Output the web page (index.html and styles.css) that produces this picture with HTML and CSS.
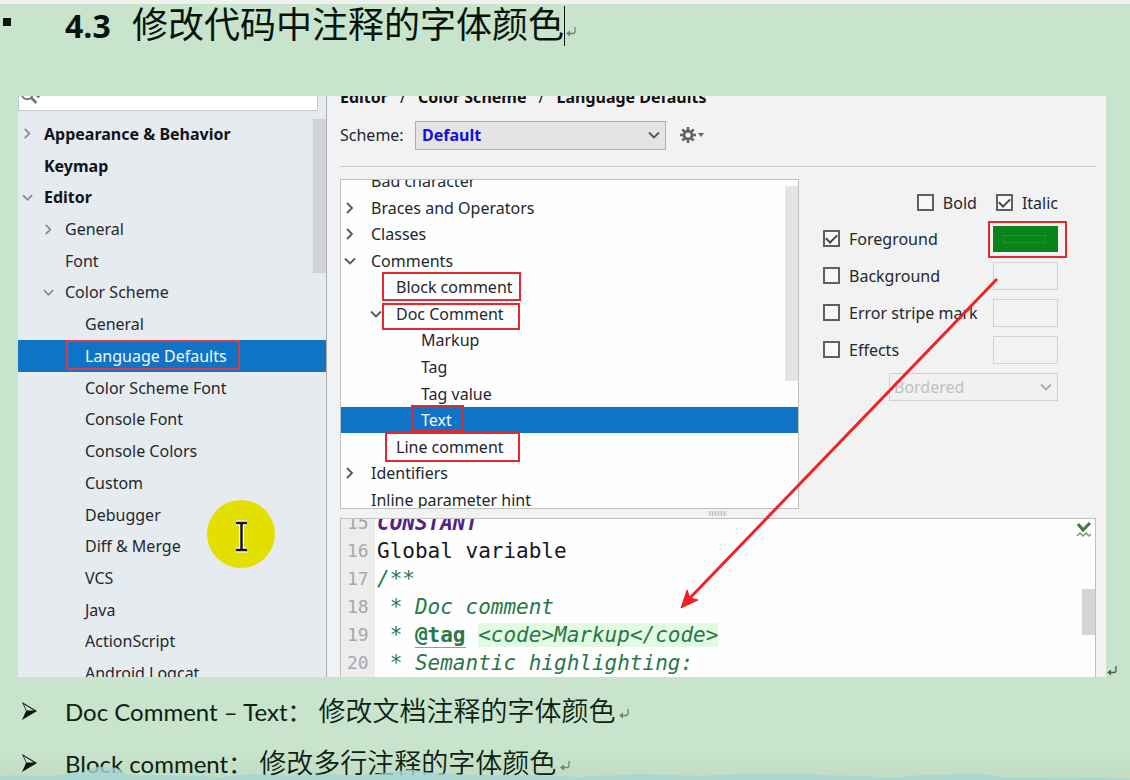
FILE: index.html
```html
<!DOCTYPE html>
<html lang="zh-CN">
<head>
<meta charset="utf-8">
<title>4.3 修改代码中注释的字体颜色</title>
<link rel="stylesheet" href="styles.css">
</head>
<body>
<svg class="defs" aria-hidden="true">
  <symbol id="right" viewBox="0 0 12 12"><path d="M3 1l5 5-5 5" fill="none" stroke="currentColor" stroke-width="1.8"/></symbol>
  <symbol id="down" viewBox="0 0 12 12"><path d="M1 3.500l5 5 5-5" fill="none" stroke="currentColor" stroke-width="1.8"/></symbol>
  <symbol id="return" viewBox="0 0 12 12"><path d="M10 1v4.500q0 2-2 2H3" fill="none" stroke="currentColor" stroke-width="1.300"/><path d="M1 7.500l4-3v6z" fill="currentColor"/></symbol>
  <symbol id="bullet" viewBox="0 0 18 20"><path d="M2 1L17 10 2 19 6 10z" fill="#07150c"/><path d="M3.800 3.300L14 9.500H6.500z" fill="#c8e4cd"/></symbol>
</svg>
<main class="page">
  <h1 class="title"><span class="square"></span><span class="num">4.3</span><span class="title-text">修改代码中注释的字体颜色</span><span class="caret"></span><svg class="ret"><use href="#return"/></svg></h1>

  <div class="figure">
    <section class="dialog">
      <nav class="sidebar" aria-label="Settings">
        <div class="search">
          <input type="text" aria-label="Search settings">
          <svg class="search-icon" viewBox="0 0 24 20"><circle cx="9" cy="7" r="6" fill="none" stroke="#777" stroke-width="2"/><path d="M13 11l6 6" stroke="#777" stroke-width="3"/><path d="M18 9h6l-3 3z" fill="#777"/></svg>
        </div>
        <ul class="settings">
          <li class="top"><svg><use href="#right"/></svg>Appearance &amp; Behavior</li>
          <li class="top">Keymap</li>
          <li class="top"><svg><use href="#down"/></svg>Editor</li>
          <li class="mid"><svg><use href="#right"/></svg>General</li>
          <li class="mid">Font</li>
          <li class="mid"><svg><use href="#down"/></svg>Color Scheme</li>
          <li>General</li>
          <li class="selected">Language Defaults<i class="mark mark-language"></i></li>
          <li>Color Scheme Font</li>
          <li>Console Font</li>
          <li>Console Colors</li>
          <li>Custom</li>
          <li>Debugger</li>
          <li>Diff &amp; Merge</li>
          <li>VCS</li>
          <li>Java</li>
          <li>ActionScript</li>
          <li>Android Logcat</li>
        </ul>
        <div class="thumb side-thumb"></div>
        <svg class="pointer" viewBox="0 0 68 68"><circle cx="34" cy="34" r="34" fill="#e3df00"/><path d="M29 23h11M34.500 23v27M29 50h11" stroke="#fff" stroke-width="5" fill="none"/><path d="M29 23h11M34.500 23v27M29 50h11" stroke="#181420" stroke-width="2.500" fill="none"/></svg>
      </nav>

      <div class="content">
        <div class="crumbs"><span>Editor</span><span class="slash">/</span><span>Color Scheme</span><span class="slash">/</span><span>Language Defaults</span></div>
        <div class="scheme">
          <label for="scheme">Scheme:</label>
          <div class="select"><select id="scheme"><option>Default</option></select><svg><use href="#down"/></svg></div>
          <button class="gear" aria-label="Scheme actions"><svg viewBox="0 0 26 18"><path d="M9 1v16M1 9h16M3.300 3.300l11.400 11.400M14.700 3.300L3.300 14.700" stroke="#666" stroke-width="2.600"/><circle cx="9" cy="9" r="4" fill="#f1f2f1" stroke="#666" stroke-width="2.800"/><path d="M19 7h6l-3 4z" fill="#666"/></svg></button>
        </div>
        <div class="body">
          <div class="tree-box">
            <ul class="tree">
              <li>Bad character</li>
              <li><svg><use href="#right"/></svg>Braces and Operators</li>
              <li><svg><use href="#right"/></svg>Classes</li>
              <li><svg><use href="#down"/></svg>Comments</li>
              <li class="l2">Block comment<i class="mark mark-block"></i></li>
              <li class="l2"><svg><use href="#down"/></svg>Doc Comment<i class="mark mark-doc"></i></li>
              <li class="l3">Markup</li>
              <li class="l3">Tag</li>
              <li class="l3">Tag value</li>
              <li class="l3 selected">Text<i class="mark mark-text"></i></li>
              <li class="l2">Line comment<i class="mark mark-line"></i></li>
              <li><svg><use href="#right"/></svg>Identifiers</li>
              <li>Inline parameter hint</li>
            </ul>
            <div class="thumb tree-thumb"></div>
          </div>
          <form class="options">
            <div class="style-row"><label><input type="checkbox">Bold</label><label><input type="checkbox" checked>Italic</label></div>
            <div class="row"><label><input type="checkbox" checked>Foreground</label><button type="button" class="swatch green" aria-label="Foreground color"><span></span><i class="mark mark-swatch"></i></button></div>
            <div class="row"><label><input type="checkbox">Background</label><button type="button" class="swatch" aria-label="Background color"></button></div>
            <div class="row"><label><input type="checkbox">Error stripe mark</label><button type="button" class="swatch" aria-label="Error stripe color"></button></div>
            <div class="row"><label><input type="checkbox">Effects</label><button type="button" class="swatch" aria-label="Effects color"></button></div>
            <div class="select effect"><select disabled aria-label="Effect type"><option>Bordered</option></select><svg><use href="#down"/></svg></div>
          </form>
        </div>
        <div class="grip"><span></span></div>
        <div class="editor">
          <div class="code">
            <div class="line"><span class="ln">15</span><code class="const">CONSTANT</code></div>
            <div class="line"><span class="ln">16</span><code>Global variable</code></div>
            <div class="line"><span class="ln">17</span><code class="doc">/**</code></div>
            <div class="line"><span class="ln">18</span><code class="doc"> * Doc comment</code></div>
            <div class="line"><span class="ln">19</span><code class="doc"> * <b>@tag</b> <mark>&lt;code&gt;Markup&lt;/code&gt;</mark></code></div>
            <div class="line"><span class="ln">20</span><code class="doc"> * Semantic highlighting:</code></div>
          </div>
          <svg class="ok" viewBox="0 0 16 16"><path d="M2 2l5 6 7-7" fill="none" stroke="#417a3a" stroke-width="3"/><path d="M1 14l3-3 3 3 3-3 3 3 2-2" fill="none" stroke="#6da568" stroke-width="1.500"/></svg>
          <div class="thumb code-thumb"></div>
        </div>
      </div>
      <svg class="arrow" viewBox="0 0 320 334"><path d="M318 2L10 322" stroke="#ee2422" stroke-width="3"/><path d="M2 331L8 313L11 321L19 323z" fill="#ee2422" stroke="#ee2422"/></svg>
    </section>
    <svg class="ret"><use href="#return"/></svg>
  </div>

  <ul class="notes">
    <li><svg class="bullet"><use href="#bullet"/></svg><span>Doc Comment – Text：<span class="han">修改文档注释的字体颜色</span></span><svg class="ret"><use href="#return"/></svg></li>
    <li><svg class="bullet"><use href="#bullet"/></svg><span>Block comment：<span class="han">修改多行注释的字体颜色</span></span><svg class="ret"><use href="#return"/></svg></li>
  </ul>
  <svg class="wave" viewBox="0 0 1130 14" preserveAspectRatio="none"><path d="M0 11Q20 8 35 10T65 8Q75 5 84 6Q94 0 108 1T124 7Q134 11 146 9L190 10 220 11 255 8 290 10 330 8 360 10 400 5Q410 1 422 6L470 9 520 9 580 11 640 8 700 10 740 8 780 7 815 7 820 9 880 11 905 11 918 9 945 9 960 7 985 8 1000 11 1080 12 1090 11 1130 13V14H0z" fill="#a5d7d5"/></svg>
</main>
</body>
</html>
```
FILE: styles.css
```css
* { box-sizing: border-box; }
body { margin: 0; font: 16px/20px "Noto Sans", "Noto Sans CJK SC", sans-serif; color: #24282e; }
ul { list-style: none; margin: 0; padding: 0; }
.defs { position: absolute; width: 0; height: 0; }
.page { position: relative; height: 100vh; overflow: hidden; padding: 0 24px 0 18px; background: linear-gradient(#c8e4cd 0, #c8e4cd 96%, #c1dcc2 100%); border-top: 4px solid #f0f1ee; }
.ret { width: 12px; height: 12px; color: #6d8572; flex: none; }

.title { display: flex; align-items: baseline; height: 36px; margin: 0 0 56px -15px; font-size: 36px; line-height: 36px; color: #06140b; }
.square { align-self: center; width: 8px; height: 8px; background: #06140b; margin-right: 54px; }
.num { font-family: "Open Sans", sans-serif; font-size: 32px; width: 67px; }
.title-text { font-family: "Noto Sans CJK SC", sans-serif; font-weight: 400; }
.caret { align-self: flex-start; width: 1px; height: 40px; margin-top: 2px; background: #06140b; }

.figure { display: flex; align-items: flex-end; margin-right: -12px; }
.figure .ret { color: #43654b; }
.dialog { position: relative; flex: 1; min-width: 0; display: flex; height: 581px; overflow: hidden; background: #f1f2f1; }
.sidebar { position: relative; flex: 0 0 309px; background: #e6ebf0; border-right: 1px solid #a9adb0; overflow: hidden; }
.search { position: relative; display: flex; align-items: flex-end; height: 15px; margin-bottom: 7px; }
.search input { width: 300px; height: 28px; border: 1px solid #c6c9cb; background: #fff; }
.search-icon { position: absolute; left: 1px; top: -9px; width: 22px; height: 19px; }
.settings { display: grid; grid-auto-rows: 1fr; height: 571px; }
.settings li { position: relative; display: flex; align-items: center; padding-left: 67px; }
.settings .top { padding-left: 26px; font-weight: 700; color: #111419; }
.settings .mid { padding-left: 47px; }
.settings svg { position: absolute; left: 4px; width: 11px; height: 11px; color: #85898d; }
.settings .mid svg { left: 25px; }
.settings .selected, .tree .selected { background: #1074c6; color: #f0f7ff; }
.thumb { position: absolute; background: #cfd3d7; }
.side-thumb { right: 0; top: 23px; width: 13px; height: 154px; }
.pointer { position: absolute; left: 189px; top: 404px; width: 68px; height: 68px; }
.mark { position: absolute; border: 2px solid #e5282b; background: none; }
.mark-language { left: 48px; width: 174px; top: 0; bottom: 2px; border-color: #cf3f4d; }

.content { flex: 1; min-width: 0; padding: 0 10px 0 13px; display: flex; flex-direction: column; }
.crumbs { display: flex; height: 25px; line-height: 2px; font-weight: 700; color: #111; }
.crumbs .slash { width: 30px; text-align: center; font-weight: 400; }
.scheme { display: flex; align-items: center; height: 28px; }
.scheme label { width: 75px; }
.select { position: relative; width: 251px; height: 29px; }
.select select { appearance: none; width: 100%; height: 100%; padding: 0 6px; border: 1px solid #adb0ad; border-radius: 0; background: #e3e4e3; font: 700 16px/20px "Noto Sans", sans-serif; color: #1010e0; }
.select svg { position: absolute; right: 6px; top: 8px; width: 12px; height: 12px; color: #555; pointer-events: none; }
.gear { border: 0; padding: 0; margin-left: 13px; background: none; height: 18px; }
.gear svg { width: 26px; height: 18px; display: block; }
.body { display: flex; margin-top: 17px; padding-top: 12px; border-top: 1px solid #c9cac9; }
.tree-box { position: relative; flex: 1; height: 330px; overflow: hidden; background: #fdfefd; border: 1px solid #bfc1bf; }
.tree { display: grid; grid-auto-rows: 1fr; height: 345px; margin-top: -12px; }
.tree li { position: relative; display: flex; align-items: center; padding-left: 30px; }
.tree .l2 { padding-left: 55px; }
.tree .l3 { padding-left: 80px; }
.tree svg { position: absolute; left: 3px; width: 12px; height: 12px; color: #55595d; }
.tree .l2 svg { left: 29px; }
.tree-thumb { right: 0; top: 6px; width: 13px; height: 195px; background: #e3e4e3; }
.mark-block { left: 41px; width: 139px; top: -2px; bottom: 0; }
.mark-doc { left: 41px; width: 138px; top: 2px; bottom: -3px; }
.mark-text { left: 70px; width: 53px; top: -2px; bottom: 1px; border-color: #cf3038; }
.mark-line { left: 44px; width: 135px; top: -1px; bottom: -2px; z-index: 1; }

.options { flex: 0 0 297px; padding: 6px 38px 0 24px; }
.options label { display: flex; align-items: center; gap: 9px; white-space: nowrap; }
.style-row { display: flex; justify-content: flex-end; gap: 19px; height: 35px; align-items: center; }
.row { display: flex; justify-content: space-between; align-items: center; height: 37px; }
.options input { appearance: none; flex: none; display: grid; place-items: center; width: 17px; height: 17px; margin: 0; border: 2px solid #5d6164; background: #f7f8f7; }
.options input:checked::before { content: ""; width: 5px; height: 9px; margin-bottom: 2px; border: solid #444; border-width: 0 2px 2px 0; transform: rotate(45deg); }
.swatch { position: relative; flex: none; width: 65px; height: 28px; padding: 0; border: 1px solid #d1d3d1; background: #f1f2f1; }
.green { height: 26px; border: 0; background: #078319; }
.green span { display: block; height: 8px; margin: 0 12px 0 10px; border: 1px dotted #3f9c47; }
.mark-swatch { left: -5px; right: -9px; top: -5px; bottom: -6px; }
.effect { width: 169px; height: 28px; margin: 5px 0 0 auto; }
.effect select { border-color: #cfd1cf; background: #f0f1f0; color: #bfc1bf; font-weight: 400; opacity: 1; padding: 0 4px; }
.effect svg { color: #aaa; }

.grip { height: 9px; display: flex; justify-content: center; align-items: center; }
.grip span { width: 18px; height: 5px; background: repeating-linear-gradient(90deg, #bfc1bf 0 1px, #e2e3e2 1px 3px); }
.editor { position: relative; flex: 1; min-height: 0; overflow: hidden; border: 1px solid #bfc1bf; border-bottom: 0; background: linear-gradient(90deg, #ededee 34px, #fdfefd 34px); font: 21px/28px "DejaVu Sans Mono", monospace; }
.code { margin-top: -10px; }
.line { display: flex; height: 28px; }
.ln { width: 36px; padding-left: 6px; font-size: 18px; color: #a5a7aa; }
.line code { font: inherit; white-space: pre; color: #16191c; }
.line .doc { color: #28784a; font-style: italic; }
.line .const { color: #53208a; font-style: italic; font-weight: 700; }
.doc b { font-style: normal; border-bottom: 1px solid #88a394; }
.doc mark { color: inherit; background: #e1fae1; }
.ok { position: absolute; right: 3px; top: 3px; width: 16px; height: 16px; }
.code-thumb { right: 0; top: 70px; width: 13px; height: 46px; background: #d5d6d5; }
.arrow { position: absolute; right: 107px; top: 181px; width: 320px; height: 334px; pointer-events: none; }

.notes { margin-top: 8px; font: 24px/52px Lato, "Noto Sans CJK SC", sans-serif; color: #0d2114; }
.notes li { display: flex; align-items: center; height: 52px; white-space: nowrap; }
.notes .bullet { width: 18px; height: 20px; margin: 0 27px 0 2px; flex: none; }
.han { margin-left: 7px; font-family: "Noto Sans CJK SC", sans-serif; font-weight: 350; font-size: 27px; }
.notes .ret { margin: 6px 0 0 3px; }
.wave { position: absolute; left: 0; bottom: 0; width: 100%; height: 14px; opacity: .8; }
```
